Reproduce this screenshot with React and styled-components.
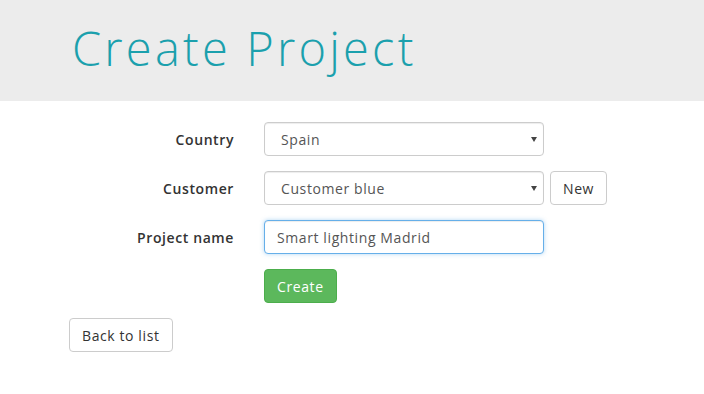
import styled, { createGlobalStyle } from 'styled-components'

const GlobalStyle = createGlobalStyle`
  body {
    margin: 0;
    background: #fff;
    font-family: "Open Sans", "Noto Sans", sans-serif;
    font-size: 14px;
    letter-spacing: 0.6px;
    color: #333;
  }
`

function App() {
  return (
    <>
      <GlobalStyle />
      <Header>
        <Title>Create Project</Title>
      </Header>
      <Main>
        <Form onSubmit={(e) => e.preventDefault()}>
          <Label htmlFor="country">Country</Label>
          <Field>
            <SelectWrap>
              <Select id="country" defaultValue="es">
                <option value="es">Spain</option>
                <option value="fr">France</option>
              </Select>
              <Arrow />
            </SelectWrap>
          </Field>

          <Label htmlFor="customer">Customer</Label>
          <Field>
            <SelectWrap>
              <Select id="customer" defaultValue="blue">
                <option value="blue">Customer blue</option>
                <option value="red">Customer red</option>
              </Select>
              <Arrow />
            </SelectWrap>
            <Button type="button">New</Button>
          </Field>

          <Label htmlFor="name">Project name</Label>
          <Field>
            <Input id="name" defaultValue="Smart lighting Madrid" autoFocus />
          </Field>

          <span />
          <Field>
            <Button type="submit" $primary>
              Create
            </Button>
          </Field>
        </Form>
        <Button type="button">Back to list</Button>
      </Main>
    </>
  )
}

export default App

const Header = styled.header`
  background: #ececec;
  height: 101px;
  padding-left: 72px;
  display: flex;
  align-items: center;
`

const Title = styled.h1`
  margin: 0 0 6px;
  font-family: "Open Sans", "Noto Sans", sans-serif;
  font-weight: 300;
  font-size: 47px;
  letter-spacing: 3.2px;
  color: #1ba0ad;
`

const Main = styled.main`
  padding: 21px 0 0 69px;
`

const Form = styled.form`
  display: grid;
  grid-template-columns: 165px auto;
  column-gap: 30px;
  row-gap: 15px;
  align-items: center;
  margin-bottom: 15px;
`

const Label = styled.label`
  text-align: right;
  font-weight: 600;
  font-size: 14px;
  color: #333;
`

const Field = styled.div`
  display: flex;
  align-items: center;
  gap: 6px;
`

const SelectWrap = styled.div`
  position: relative;
  width: 280px;
`

const Select = styled.select`
  appearance: none;
  width: 100%;
  height: 34px;
  padding: 0 24px 0 16px;
  border: 1px solid #ccc;
  border-radius: 4px;
  background: #fff;
  font-family: inherit;
  font-size: 14px;
  letter-spacing: inherit;
  color: #555;
  box-shadow: inset 0 1px 1px rgba(0, 0, 0, 0.075);
`

const Arrow = styled.span`
  position: absolute;
  right: 7px;
  top: 15px;
  width: 0;
  height: 0;
  border-left: 3px solid transparent;
  border-right: 3px solid transparent;
  border-top: 5px solid #444;
  pointer-events: none;
`

const Input = styled.input`
  box-sizing: border-box;
  width: 280px;
  height: 34px;
  padding: 0 12px;
  border: 1px solid #66afe9;
  border-radius: 4px;
  font-family: inherit;
  font-size: 14px;
  letter-spacing: inherit;
  color: #555;
  outline: none;
  box-shadow: inset 0 1px 1px rgba(0, 0, 0, 0.075), 0 0 4px rgba(102, 175, 233, 0.5);
  caret-color: #333;
`

const Button = styled.button`
  height: 34px;
  padding: 0 12px;
  border: 1px solid ${(p) => (p.$primary ? '#4cae4c' : '#ccc')};
  border-radius: 4px;
  background: ${(p) => (p.$primary ? '#5cb85c' : '#fff')};
  color: ${(p) => (p.$primary ? '#fff' : '#333')};
  font-family: inherit;
  font-size: 14px;
  letter-spacing: inherit;
  cursor: pointer;
`
